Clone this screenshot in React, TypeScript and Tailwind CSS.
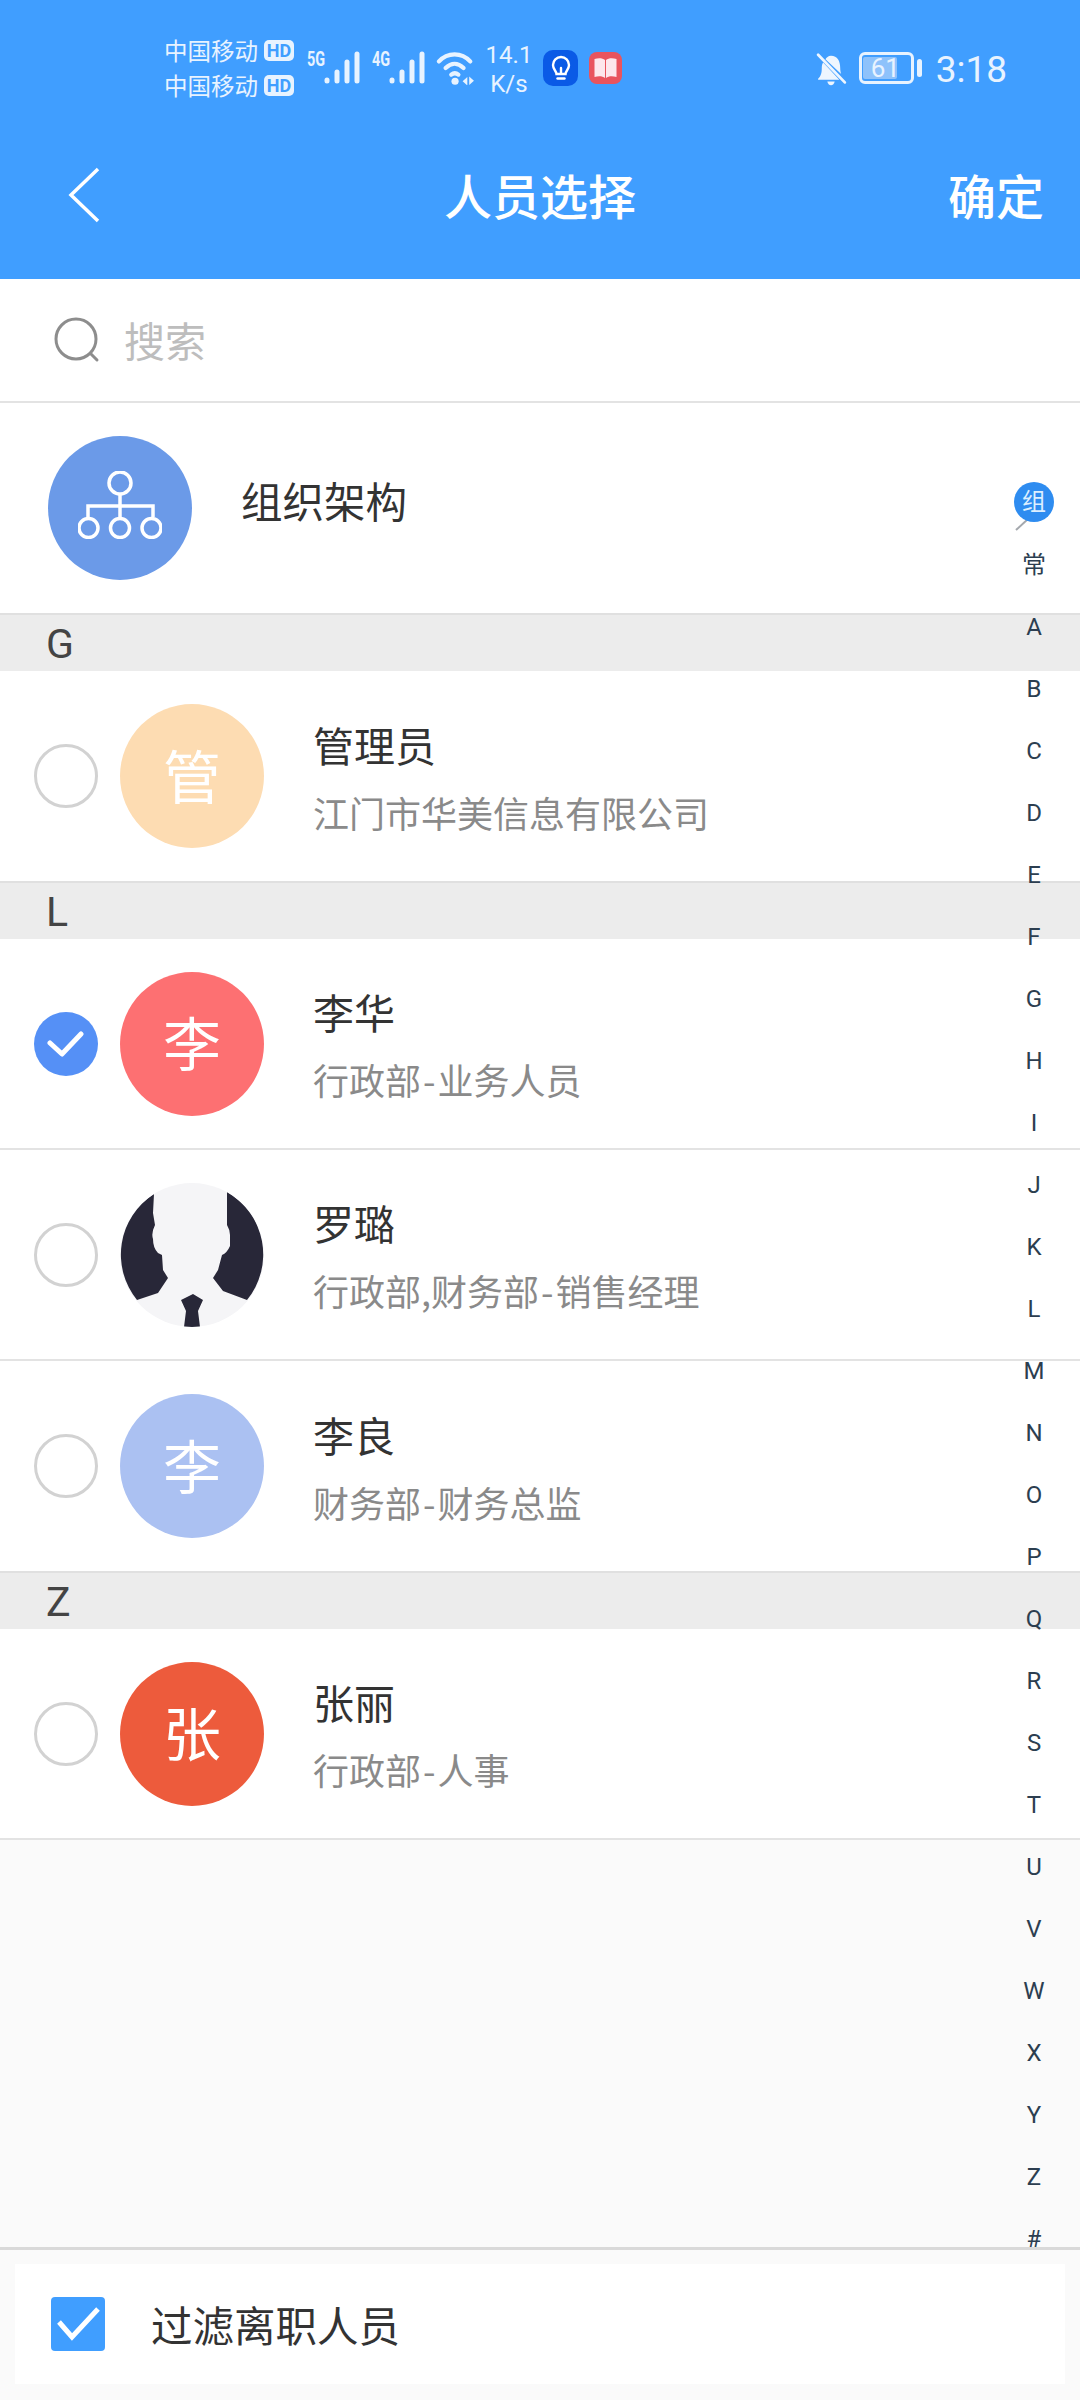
import React from 'react';

const cjk = { fontFamily: '"Noto Sans CJK SC", sans-serif' };

const letters: string[] = ['组', '常', 'A', 'B', 'C', 'D', 'E', 'F', 'G', 'H', 'I', 'J', 'K', 'L', 'M', 'N', 'O', 'P', 'Q', 'R', 'S', 'T', 'U', 'V', 'W', 'X', 'Y', 'Z', '#'];

function Signal({ label }: { label: string }) {
  return (
    <div className="relative w-[53px] h-[33px]">
      <span className="absolute left-0 top-[-2px] text-[20px] leading-[20px] font-bold text-[#e8f3ff] scale-x-[0.72] origin-left font-['Roboto']">{label}</span>
      <svg width="36" height="33" viewBox="0 0 36 33" className="absolute right-0 top-0">
        <g fill="none" stroke="#e8f3ff" strokeLinecap="round" strokeWidth="5">
          <path d="M3 30v-1" />
          <path d="M13 30v-9" />
          <path d="M23 30v-19" />
          <path d="M33 30v-27" />
        </g>
      </svg>
    </div>
  );
}

function StatusBar() {
  return (
    <div className="h-[110px] pt-[35px] pl-[164px] pr-[73px] flex items-start text-[#e8f3ff]">
      <div className="flex flex-col w-[130px] mt-[-2px] text-[23.5px] leading-[35px]">
        {[0, 1].map((i) => (
          <div key={i} className="flex items-center">
            <span className="w-[94px] whitespace-nowrap">中国移动</span>
            <span className="ml-[6px] w-[30px] h-[21px] rounded-[5px] bg-[#e8f3ff] text-[#409eff] text-[18px] leading-[21px] font-bold text-center font-['Roboto']">HD</span>
          </div>
        ))}
      </div>
      <div className="flex mt-[16px] ml-[13px] gap-[12px]">
        <Signal label="5G" />
        <Signal label="4G" />
      </div>
      <svg width="40" height="34" viewBox="0 0 42 36" className="ml-[11px] mt-[16px]">
        <g fill="none" stroke="#e8f3ff" strokeWidth="4.500" strokeLinecap="round">
          <path d="M3 11C12 1 27 1 36 11" />
          <path d="M10 18c6-6 13-6 19 0" />
          <path d="M16 25c2.500-2 5-2 7.500 0" />
        </g>
        <circle cx="20" cy="32" r="3.800" fill="#e8f3ff" />
        <path d="M28 32l5-4.500v9zM35 27v9l5-4.500z" fill="#e8f3ff" />
      </svg>
      <div className="ml-[12px] mt-[6px] w-[42px] flex flex-col items-center text-[24px] leading-[29px] font-['Roboto'] whitespace-nowrap">
        <span>14.1</span>
        <span>K/s</span>
      </div>
      <div className="ml-[13px] mt-[15px] w-[35px] h-[36px] rounded-[10px] bg-[#0a5ae6] flex items-center justify-center">
        <svg width="24" height="28" viewBox="0 0 24 28" fill="none" stroke="#fff" strokeWidth="2.400" strokeLinecap="round">
          <path d="M7.500 20c0-3-3.500-4.500-3.500-9a8 8 0 0 1 16 0c0 4.500-3.500 6-3.500 9z" />
          <path d="M8.500 24.500h7" />
          <path d="M12 14v5" />
        </svg>
      </div>
      <div className="ml-[11px] mt-[17px] w-[33px] h-[32px] rounded-[8px] bg-[#e9545e] flex items-center justify-center">
        <svg width="25" height="24" viewBox="0 0 24 24">
          <path d="M1 3c4-1 8-1 10.500 1v18C9 20 5 20 1 21zM23 3c-4-1-8-1-10.500 1v18c2.500-2 6.500-2 10.500-1z" fill="#fde7ec" />
        </svg>
      </div>
      <div className="flex-1" />
      <svg width="32" height="35" viewBox="0 0 34 38" className="mt-[17px]">
        <path d="M3 29c3-3 4-6 4-12 0-2 .5-4 1.500-5.500L26 30H3zM11 8c1-2 3-4 6-4 7 0 10 6 10 13 0 3 .5 5 1 7z" fill="#eef6ff" />
        <path d="M13 32h8c-.5 2.500-2 4-4 4s-3.500-1.500-4-4z" fill="#eef6ff" />
        <path d="M3 3l29 30" stroke="#eef6ff" strokeWidth="3" strokeLinecap="round" />
      </svg>
      <div className="ml-[12px] mt-[17px] relative w-[55px] h-[32px] rounded-[6px] border-[3px] border-[#e8f3ff]">
        <div className="absolute left-[1px] top-[2px] bottom-[2px] w-[34px] bg-[#8ec2fb] rounded-[2px]" />
        <span className="absolute inset-0 pl-[9px] text-[26px] leading-[26px] font-['Roboto']">61</span>
      </div>
      <div className="ml-[3px] mt-[24px] w-[5px] h-[18px] bg-[#e8f3ff] rounded-full" />
      <span className="ml-[14px] mt-[14px] text-[37px] leading-[42px] font-['Roboto'] whitespace-nowrap">3:18</span>
    </div>
  );
}

function Header() {
  return (
    <div className="h-[279px] bg-[#409eff] flex flex-col">
      <StatusBar />
      <div className="flex-1 relative flex items-center justify-center pb-[2px] text-white">
        <svg width="32" height="56" viewBox="0 0 32 56" className="absolute left-[68px] top-[57px]" fill="none" stroke="#fff" strokeWidth="3.500">
          <path d="M30 2L3 28l27 26" />
        </svg>
        <span className="text-[48px] leading-[64px] font-medium">人员选择</span>
        <span className="absolute right-[36px] text-[48px] leading-[64px] font-medium">确定</span>
      </div>
    </div>
  );
}

function SearchBar() {
  return (
    <div className="h-[124px] bg-white border-b-2 border-[#e3e3e3] flex items-center pl-[52px]">
      <svg width="48" height="48" viewBox="0 0 48 48" fill="none" stroke="#8d8d8d" strokeWidth="3" strokeLinecap="round">
        <circle cx="24" cy="23" r="20" />
        <path d="M39 38l6 6" />
      </svg>
      <span className="ml-[24px] text-[41px] text-[#bdbdbd]">搜索</span>
    </div>
  );
}

function OrgRow() {
  return (
    <div className="h-[210px] bg-white flex items-center pl-[48px]">
      <div className="w-[144px] h-[144px] rounded-full bg-[#6b9ae8] flex items-center justify-center pb-[6px]">
        <svg width="84" height="68" viewBox="0 0 84 68" fill="none" stroke="#fff" strokeWidth="3.500">
          <circle cx="42" cy="12" r="11" />
          <path d="M42 23v12M10 46V35h65v11M42 35v11" />
          <circle cx="10.500" cy="57" r="9.500" />
          <circle cx="42" cy="57" r="9.500" />
          <circle cx="73.500" cy="57" r="9.500" />
        </svg>
      </div>
      <span className="ml-[49px] mb-[15px] text-[41.5px] text-[#333]">组织架构</span>
    </div>
  );
}

function SectionHeader({ letter }: { letter: string }) {
  return (
    <div className="h-[58px] pt-[4px] bg-[#ececec] border-t-2 border-[#e0e0e0] pl-[46px] flex items-center text-[41px] text-[#444] font-['Roboto']">
      {letter}
    </div>
  );
}

function SuitAvatar() {
  return (
    <div className="w-[144px] h-[144px] rounded-full bg-[#f5f5f7] overflow-hidden">
      <svg width="144" height="144" viewBox="0 0 144 144">
        <path d="M34 11L33 30L35 42Q31 50 33 56Q33 65 38 70L42 72L43 87L48 95L38 110L17 117A72 72 0 0 1 34 11Z" fill="#282738" />
        <path d="M107 9L107 30L107 42Q110 47 110 52L110 63Q107 70 102 72L98 87L93 95L103 108L127 117A72 72 0 0 0 107 9Z" fill="#282738" />
        <path d="M73 111L61 117L66 128L64 144H80L78 128L83 117Z" fill="#282738" />
      </svg>
    </div>
  );
}

type Person = {
  name: string;
  sub: string;
  avatar: string | null;
  color: string;
  checked?: boolean;
  border?: boolean;
};

function PersonRow({ name, sub, avatar, color, checked, border }: Person) {
  const [left, right] = sub.split('-');
  return (
    <div className={`bg-white flex items-center pl-[34px] ${border ? 'h-[211px] border-b-2 border-[#e3e3e3]' : 'h-[210px]'}`}>
      {checked ? (
        <div className="w-[64px] h-[64px] rounded-full bg-[#5590f6] flex items-center justify-center">
          <svg width="38" height="30" viewBox="0 0 38 30" fill="none" stroke="#fff" strokeWidth="5" strokeLinecap="round" strokeLinejoin="round">
            <path d="M3 14l12 11L34 5" />
          </svg>
        </div>
      ) : (
        <div className="w-[64px] h-[64px] rounded-full border-[3px] border-[#d2d2d2]" />
      )}
      <div className="ml-[22px]">
        {avatar ? (
          <div className={`w-[144px] h-[144px] pb-[4px] rounded-full flex items-center justify-center text-white text-[58px] ${color}`}>
            {avatar}
          </div>
        ) : (
          <SuitAvatar />
        )}
      </div>
      <div className="ml-[49px] flex flex-col">
        <span className="text-[41px] leading-[58px] text-[#333]">{name}</span>
        <span className="mt-[13px] text-[36px] leading-[52px] text-[#8a8a8a] whitespace-nowrap">
          {left}
          {right ? <span className="mx-[2px]">-</span> : null}
          {right}
        </span>
      </div>
    </div>
  );
}

function IndexBar() {
  return (
    <div className="absolute right-[16px] top-[472px] w-[60px] flex flex-col items-center text-[#2c3e50]">
      {letters.map((l, i) => (
        <div key={l} className="h-[62px] flex items-center justify-center text-[24px] font-['Roboto',_'Noto_Sans_CJK_SC']">
          {i === 0 ? (
            <div className="relative mt-[-3px]">
              <svg width="14" height="14" viewBox="0 0 14 14" className="absolute left-[1px] top-[35px]">
                <path d="M1 13L13 2" stroke="#a4a8ad" strokeWidth="2" />
              </svg>
              <div className="relative w-[40px] h-[40px] rounded-full bg-[#2e8cf0] text-[#dcefff] flex items-center justify-center">{l}</div>
            </div>
          ) : (
            l
          )}
        </div>
      ))}
    </div>
  );
}

function Footer() {
  return (
    <div className="h-[153px] bg-[#fafafa] border-t-[3px] border-[#d9d9d9] pl-[15px] pr-[15px] pt-[14px]">
      <div className="h-[120px] bg-white flex items-center pl-[36px]">
        <svg width="54" height="54" viewBox="0 0 54 54" className="rounded-[4px] bg-[#409eff]" fill="none" stroke="#fff" strokeWidth="5">
          <path d="M8 25L21 40L47 12" />
        </svg>
        <span className="ml-[46px] text-[41.5px] text-[#333]">过滤离职人员</span>
      </div>
    </div>
  );
}

const gRows: Person[] = [{ name: '管理员', sub: '江门市华美信息有限公司', avatar: '管', color: 'bg-[#fddcb2]' }];
const lRows: Person[] = [
  { name: '李华', sub: '行政部-业务人员', avatar: '李', color: 'bg-[#fd7072]', checked: true, border: true },
  { name: '罗璐', sub: '行政部,财务部-销售经理', avatar: null, color: '', border: true },
  { name: '李良', sub: '财务部-财务总监', avatar: '李', color: 'bg-[#abc1f2]' },
];
const zRows: Person[] = [{ name: '张丽', sub: '行政部-人事', avatar: '张', color: 'bg-[#ed5b3c]', border: true }];

export default function App() {
  return (
    <div className="relative w-[1080px] h-[2400px] bg-[#fafafa] flex flex-col overflow-hidden" style={cjk}>
      <Header />
      <SearchBar />
      <OrgRow />
      <SectionHeader letter="G" />
      {gRows.map((p) => <PersonRow key={p.name} {...p} />)}
      <SectionHeader letter="L" />
      {lRows.map((p) => <PersonRow key={p.name} {...p} />)}
      <SectionHeader letter="Z" />
      {zRows.map((p) => <PersonRow key={p.name} {...p} />)}
      <div className="flex-1" />
      <Footer />
      <IndexBar />
    </div>
  );
}
